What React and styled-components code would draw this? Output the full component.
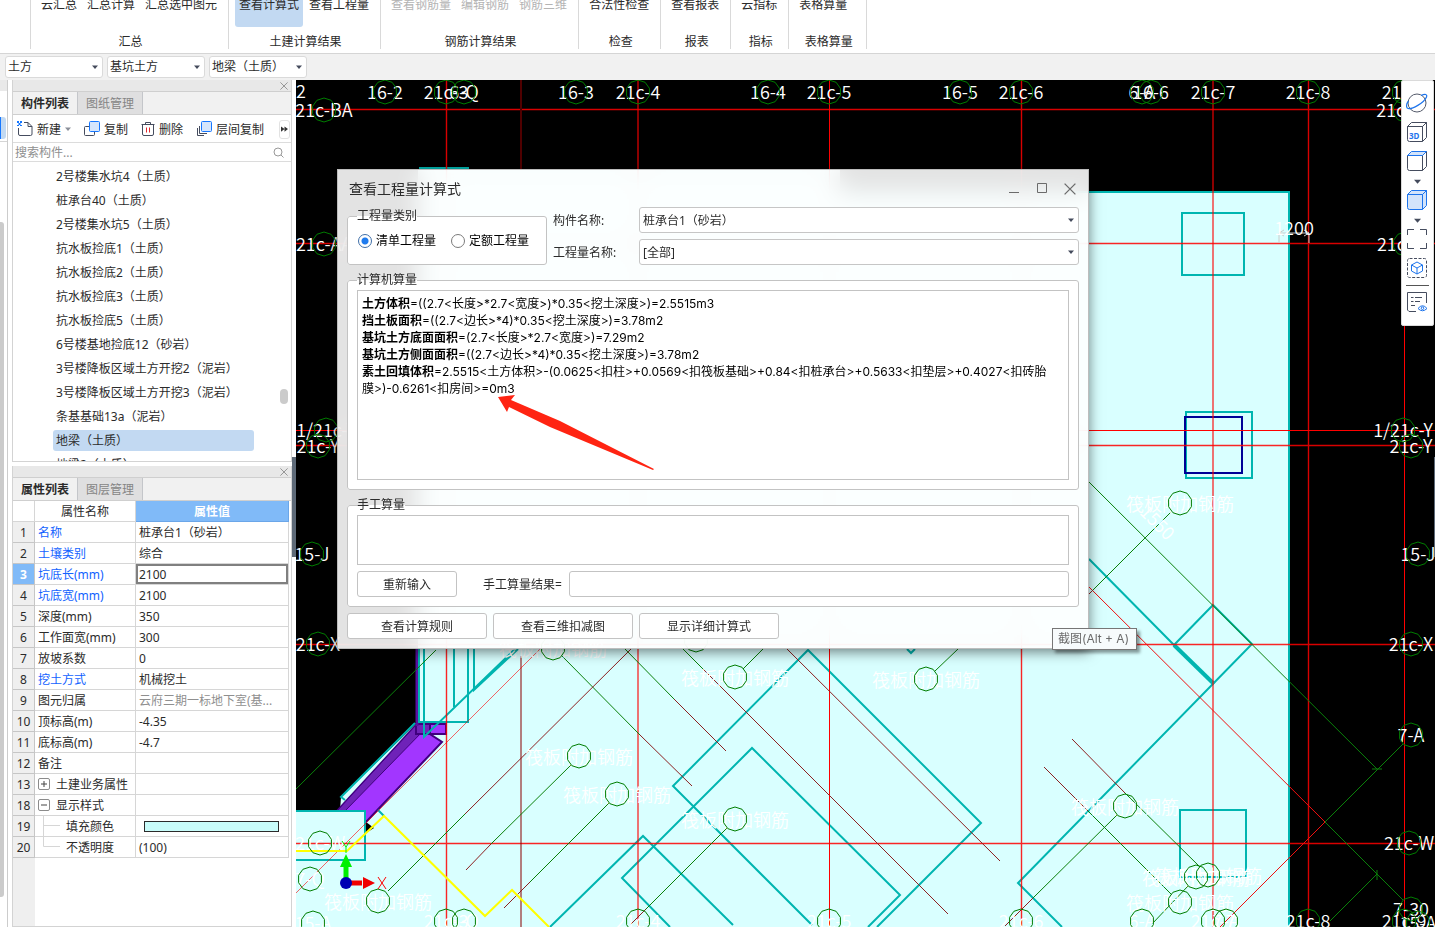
import React, { useState } from "react";
import styled, { createGlobalStyle, css } from "styled-components";

const GlobalStyle = createGlobalStyle`
  * {
    box-sizing: border-box;
  }

  body {
    margin: 0;
    overflow: hidden;
    background: #ffffff;
    color: #2b2b2b;
    font-family: "Noto Sans", "Noto Sans CJK SC", sans-serif;
    font-size: 12px;
    line-height: 17px;
  }

  button,
  input,
  select,
  textarea {
    font: inherit;
    color: inherit;
  }

  button {
    padding: 0;
    border: none;
    background: none;
  }
`;

const Page = styled.div`
  display: flex;
  flex-direction: column;
  height: 100vh;
  overflow: hidden;
`;

/* ---------- ribbon ---------- */

const Ribbon = styled.header`
  display: flex;
  flex: none;
  height: 54px;
  padding-left: 30px;
  border-bottom: 1px solid #d5d5d5;
  overflow: hidden;
`;

const RibbonGroup = styled.section`
  display: flex;
  flex-direction: column;
  justify-content: space-between;
  height: 49px;
  min-width: ${({ $last }) => ($last ? "79px" : "0")};
  padding: 0 6px 0 5px;
  border-left: 1px solid #d9d9d9;
  border-right: ${({ $last }) => ($last ? "1px solid #d9d9d9" : "none")};
`;

const RibbonButtons = styled.div`
  display: flex;
`;

const RibbonButton = styled.button`
  display: flex;
  align-items: flex-start;
  height: 27px;
  margin: 0 1px;
  padding: 0 4px;
  border-radius: 0 0 3px 3px;
  line-height: 10px;
  white-space: nowrap;
  background: ${({ $active }) => ($active ? "#c2d9f2" : "transparent")};
  color: ${({ disabled }) => (disabled ? "#b4b4b4" : "#2b2b2b")};
`;

const RibbonTitle = styled.div`
  padding-left: 3px;
  line-height: 15px;
  text-align: center;
`;

/* ---------- combo boxes ---------- */

const FilterBar = styled.div`
  display: flex;
  flex: none;
  align-items: center;
  gap: 4px;
  height: 26px;
  padding: 0 0 1px 5px;
  background: #f1f1f1;
`;

const ComboBox = styled.div`
  display: grid;
  align-items: center;
  width: ${({ $wide }) => ($wide ? "100%" : "98px")};
  height: ${({ $wide }) => ($wide ? "26px" : "22px")};

  select,
  svg {
    grid-area: 1 / 1;
  }

  select {
    width: 100%;
    height: 100%;
    padding: 0 16px 0 ${({ $wide }) => ($wide ? "3px" : "2px")};
    border: 1px solid ${({ $wide }) => ($wide ? "#c6c6c6" : "#dadada")};
    border-radius: 3px;
    background: #ffffff;
    appearance: none;
  }

  svg {
    justify-self: end;
    margin-right: 5px;
    pointer-events: none;
  }
`;

/* ---------- left side ---------- */

const Workspace = styled.main`
  display: flex;
  flex: 1;
  min-height: 0;
`;

const NavStrip = styled.aside`
  display: flex;
  flex: none;
  flex-direction: column;
  width: 8px;
  border-right: 1px solid #cccccc;
  overflow: hidden;
`;

const NavHead = styled.div`
  height: 62px;
  padding-top: 37px;
  border-bottom: 1px solid #d5d5d5;
  background: linear-gradient(#e9e9e9 11px, #ffffff 11px);
`;

const NavActive = styled.div`
  width: 6px;
  height: 22px;
  border-radius: 0 3px 3px 0;
  border-left: 1px solid #1677ff;
  background: #c2d9f2;
`;

const NavThumb = styled.div`
  flex: 1;
  width: 4px;
  margin: 80px 0 30px;
  border-radius: 0 3px 3px 0;
  background: #cbcbcb;
`;

const Panels = styled.div`
  display: flex;
  flex: none;
  flex-direction: column;
  gap: 4px;
  width: 280px;
  margin-left: 4px;
`;

const Panel = styled.section`
  display: flex;
  flex-direction: column;
  flex: ${({ $grow }) => $grow} 1 0;
  min-height: 0;
  border: 1px solid #d3d3d3;
  border-top: none;
  overflow: hidden;
`;

const PanelHead = styled.div`
  display: flex;
  flex: none;
  align-items: center;
  justify-content: flex-end;
  height: 12px;
  padding-right: 3px;
  border-bottom: 1px solid #cfcfcf;
  background: #e8e8e8;
`;

const PanelTabs = styled.div`
  display: flex;
  flex: none;
  height: 23px;
  border-bottom: 1px solid #cfcfcf;
  background: #f1f1f1;
`;

const PanelTab = styled.button`
  width: 65px;
  border-right: 1px solid #c4c6ca;
  font-weight: ${({ $active }) => ($active ? 700 : 400)};
  background: ${({ $active }) => ($active ? "#f1f1f1" : "#dfdfe0")};
  color: ${({ $active }) => ($active ? "#2b2b2b" : "#858585")};
`;

const PanelTools = styled.div`
  display: flex;
  flex: none;
  align-items: center;
  gap: 13px;
  height: 28px;
  padding: 1px 0 0 4px;
  border-bottom: 1px solid #dcdcdc;
`;

const ToolButton = styled.button`
  display: flex;
  align-items: center;
  gap: 4px;
  white-space: nowrap;
`;

const MoreButton = styled.button`
  display: flex;
  flex: none;
  align-items: center;
  justify-content: center;
  width: 11px;
  height: 19px;
  margin: 0 1px 0 auto;
  border: 1px solid #e2e2e2;
  border-radius: 3px;
`;

const SearchRow = styled.label`
  display: flex;
  flex: none;
  align-items: center;
  height: 19px;
  padding: 0 7px 0 2px;
  border-bottom: 1px solid #dcdcdc;

  input {
    flex: 1;
    min-width: 0;
    padding: 0;
    border: none;
    outline: none;
  }

  input::placeholder {
    color: #8f8f8f;
  }
`;

const ListArea = styled.div`
  display: flex;
  flex: 1;
  min-height: 0;
  overflow: hidden;
`;

const PartList = styled.ul`
  flex: 1;
  margin: 0;
  padding: 4px 26px 0 40px;
  list-style: none;
`;

const PartItem = styled.li`
  height: 21px;
  margin-bottom: 3px;
  padding-left: 3px;
  border-radius: 3px;
  line-height: 21px;
  white-space: nowrap;
  background: ${({ $active }) => ($active ? "#c2d9f2" : "transparent")};
`;

const ListThumb = styled.div`
  align-self: flex-end;
  width: 8px;
  height: 15px;
  margin: 0 3px 57px 0;
  border-radius: 4px;
  background: #cbcbcb;
`;

const TableArea = styled.div`
  flex: 1;
  padding-right: 2px;
  background: linear-gradient(90deg, #efefef 22px, #ffffff 22px);
`;

const PropTable = styled.table`
  width: 100%;
  table-layout: fixed;
  border-collapse: separate;
  border-spacing: 0;

  th,
  td {
    height: 21px;
    padding: 0 3px;
    border-right: 1px solid #d6d6d6;
    border-bottom: 1px solid #d6d6d6;
    background: #ffffff;
    font-weight: 400;
    text-align: left;
    white-space: nowrap;
    overflow: hidden;
  }

  thead th {
    text-align: center;
  }
`;

const ValueHead = styled.th`
  && {
    border-color: #6ba6e8;
    background: #80baf8;
    color: #ffffff;
    font-weight: 700;
  }
`;

const RowNumber = styled.th`
  && {
    padding: 0;
    border-color: #c6c6c6;
    text-align: center;
    background: #efefef;
    ${({ $active }) =>
      $active &&
      css`
        background: #80baf8;
        color: #ffffff;
        font-weight: 700;
      `}
  }
`;

const NameCell = styled.td`
  && {
    color: ${({ $key }) => ($key ? "#1262ff" : "#2b2b2b")};
  }
`;

const NameInner = styled.div`
  display: flex;
  align-items: center;
  gap: 6px;
`;

const ValueCell = styled.td`
  && {
    color: ${({ $muted }) => ($muted ? "#8f8f8f" : "#2b2b2b")};
    text-overflow: ellipsis;
    box-shadow: ${({ $active }) =>
      $active ? "inset 0 0 0 2px #808080" : "none"};
  }
`;

const Expander = styled.button`
  display: flex;
  align-items: center;
  justify-content: center;
  width: 12px;
  height: 12px;
  border: 1px solid #8b8b8b;
  border-radius: 2px;
`;

const Swatch = styled.div`
  height: 11px;
  margin: 0 6px 0 5px;
  border: 1px solid #2b2b2b;
  background: #c8fcfa;
`;

const Gutter = styled.div`
  display: flex;
  flex: none;
  align-items: center;
  width: 4px;
  padding-top: 7px;
`;

const Splitter = styled.button`
  width: 4px;
  height: 100px;
  background: #5e6a78;
`;

/* ---------- drawing area ---------- */

const Stage = styled.div`
  position: relative;
  flex: 1;
  min-width: 0;
  overflow: hidden;
  background: #000000;
`;

const Drawing = styled.svg`
  display: block;
  width: 100%;
  height: 100%;
  font-family: "Noto Sans CJK SC", sans-serif;
  font-size: 18px;
  font-weight: 350;
`;

const Marker = styled.svg`
  position: absolute;
  left: 200px;
  top: 314px;
  pointer-events: none;
`;

const Palette = styled.nav`
  position: absolute;
  top: 0;
  right: 1px;
  display: flex;
  flex-direction: column;
  align-items: center;
  width: 33px;
  height: 246px;
  padding: 12px 1px 0 0;
  border: 1px solid #dadada;
  border-radius: 2px;
  background: #ffffff;
`;

const PaletteButton = styled.button`
  display: flex;
  align-items: center;
  justify-content: center;
  width: 22px;
  height: ${({ $caret }) => ($caret ? "10px" : "20px")};
  margin-bottom: ${({ $gap }) => $gap || 0}px;
`;

const PaletteRule = styled.hr`
  width: 23px;
  height: 1px;
  margin: 7px 0 6px;
  border: none;
  background: #555555;
`;

const Tooltip = styled.div`
  position: absolute;
  left: 756px;
  top: 548px;
  height: 22px;
  padding: 0 7px 0 5px;
  border: 1px solid #767676;
  background: #f7fbfc;
  box-shadow: 3px 3px 3px rgba(0, 0, 0, 0.4);
  color: #6b6b6b;
  font-family: Inter, "Noto Sans CJK SC", sans-serif;
  line-height: 20px;
  white-space: nowrap;
`;

/* ---------- dialog ---------- */

const Dialog = styled.form`
  position: absolute;
  left: 41px;
  top: 89px;
  display: flex;
  flex-direction: column;
  gap: 6px;
  width: 752px;
  padding: 0 9px 9px;
  border: 1px solid #bdbdbd;
  background: rgba(255, 255, 255, 0.89);
  backdrop-filter: blur(12px);
  box-shadow: 0 3px 12px rgba(0, 0, 0, 0.5);
`;

const DialogHead = styled.div`
  display: flex;
  align-items: center;
  justify-content: space-between;
  height: 31px;
  padding: 7px 3px 0 2px;
`;

const DialogTitle = styled.h1`
  margin: 0;
  font-size: 14px;
  font-weight: 400;
  line-height: 20px;
`;

const WindowButtons = styled.div`
  display: flex;
  gap: 16px;

  button {
    display: flex;
  }
`;

const TopFields = styled.div`
  display: grid;
  grid-template-columns: 200px 80px 1fr;
  grid-template-rows: 26px 26px;
  gap: 6px;
  align-items: center;
`;

const GroupBox = styled.fieldset`
  min-width: 0;
  margin: 0;
  padding: 1px 9px 9px;
  border: 1px solid #c3c3c3;
  border-radius: 3px;
  background: #ffffff;

  legend {
    padding: 0;
    line-height: 18px;
  }
`;

const KindBox = styled(GroupBox)`
  grid-row: 1 / 3;
  align-self: stretch;
`;

const RadioRow = styled.div`
  display: flex;
  gap: 15px;
  padding: 6px 0 0 1px;
  color: #000000;
`;

const RadioLabel = styled.label`
  display: flex;
  align-items: center;
  gap: 4px;

  input {
    width: 14px;
    height: 14px;
    margin: 0;
    border: 1px solid #7b7b7b;
    border-radius: 50%;
    background: #ffffff;
    appearance: none;
  }

  input:checked {
    border-color: #3f6fa8;
    background: radial-gradient(circle, #1f7bee 3px, #ffffff 4px);
  }
`;

const Formula = styled.div`
  height: 190px;
  padding: 4px 12px 4px 4px;
  border: 1px solid #c3c3c3;
  color: #000000;
  font-family: Inter, "Noto Sans CJK SC", sans-serif;
  word-break: break-all;

  p {
    margin: 0;
  }
`;

const ManualInput = styled.textarea`
  display: block;
  width: 100%;
  height: 50px;
  border: 1px solid #c3c3c3;
  outline: none;
  resize: none;
`;

const ResultRow = styled.div`
  display: flex;
  align-items: center;
  margin-top: 6px;

  label {
    margin: 0 7px 0 26px;
  }

  input {
    flex: 1;
    height: 26px;
    border: 1px solid #c3c3c3;
    border-radius: 3px;
    outline: none;
  }
`;

const PushButton = styled.button`
  width: ${({ $small }) => ($small ? "100px" : "140px")};
  height: 26px;
  border: 1px solid #c3c3c3;
  border-radius: 3px;
  background: #ffffff;
`;

const DialogFoot = styled.div`
  display: flex;
  gap: 6px;
`;

/* ---------- data ---------- */

const ribbonGroups = [
  { title: "汇总", items: ["云汇总", "汇总计算", "汇总选中图元"] },
  { title: "土建计算结果", items: ["查看计算式", "查看工程量"], active: 0 },
  {
    title: "钢筋计算结果",
    items: ["查看钢筋量", "编辑钢筋", "钢筋三维"],
    disabled: true,
  },
  { title: "检查", items: ["合法性检查"] },
  { title: "报表", items: ["查看报表"] },
  { title: "指标", items: ["云指标"] },
  { title: "表格算量", items: ["表格算量"] },
];

const parts = [
  "2号楼集水坑4（土质）",
  "桩承台40（土质）",
  "2号楼集水坑5（土质）",
  "抗水板捡底1（土质）",
  "抗水板捡底2（土质）",
  "抗水板捡底3（土质）",
  "抗水板捡底5（土质）",
  "6号楼基地捡底12（砂岩）",
  "3号楼降板区域土方开挖2（泥岩）",
  "3号楼降板区域土方开挖3（泥岩）",
  "条基基础13a（泥岩）",
  "地梁（土质）",
  "地梁2（土质）",
];

const properties = [
  { no: 1, name: "名称", value: "桩承台1（砂岩）", key: true },
  { no: 2, name: "土壤类别", value: "综合", key: true },
  { no: 3, name: "坑底长(mm)", value: "2100", key: true, active: true },
  { no: 4, name: "坑底宽(mm)", value: "2100", key: true },
  { no: 5, name: "深度(mm)", value: "350" },
  { no: 6, name: "工作面宽(mm)", value: "300" },
  { no: 7, name: "放坡系数", value: "0" },
  { no: 8, name: "挖土方式", value: "机械挖土", key: true },
  { no: 9, name: "图元归属", value: "云府三期一标地下室(基...", muted: true },
  { no: 10, name: "顶标高(m)", value: "-4.35" },
  { no: 11, name: "底标高(m)", value: "-4.7" },
  { no: 12, name: "备注", value: "" },
  { no: 13, name: "土建业务属性", value: "", sign: "+" },
  { no: 18, name: "显示样式", value: "", sign: "-" },
  { no: 19, name: "填充颜色", swatch: true, branch: "mid" },
  { no: 20, name: "不透明度", value: "(100)", branch: "end" },
];

const formulas = [
  ["土方体积", "=((2.7<长度>*2.7<宽度>)*0.35<挖土深度>)=2.5515m3"],
  ["挡土板面积", "=((2.7<边长>*4)*0.35<挖土深度>)=3.78m2"],
  ["基坑土方底面面积", "=(2.7<长度>*2.7<宽度>)=7.29m2"],
  ["基坑土方侧面面积", "=((2.7<边长>*4)*0.35<挖土深度>)=3.78m2"],
  [
    "素土回填体积",
    "=2.5515<土方体积>-(0.0625<扣柱>+0.0569<扣筏板基础>+0.84<扣桩承台>+0.5633<扣垫层>+0.4027<扣砖胎膜>)-0.6261<扣房间>=0m3",
  ],
];

// axis bubbles: text, x, y
const axes = [
  ["16-2", 385, 92],
  ["21c-3", 446, 92],
  ["6-Q", 464, 92],
  ["16-3", 576, 92],
  ["21c-4", 638, 92],
  ["16-4", 768, 92],
  ["21c-5", 829, 92],
  ["16-5", 960, 92],
  ["21c-6", 1021, 92],
  ["6-A", 1142, 92],
  ["16-6", 1151, 92],
  ["21c-7", 1213, 92],
  ["21c-8", 1308, 92],
  ["21c-9", 1404, 92],
  ["21c-BA", 324, 110],
  ["21c-BA", 1405, 110],
  ["21c-AA", 324, 244],
  ["21c-AA", 1405, 244],
  ["1/21c-Y", 326, 430],
  ["21c-Y", 318, 446],
  ["1/21c-Y", 1403, 430],
  ["21c-Y", 1411, 446],
  ["15-J", 312, 554],
  ["15-J", 1418, 554],
  ["21c-X", 318, 644],
  ["21c-X", 1411, 644],
  ["7-A", 1411, 735],
  ["21c-W", 320, 843],
  ["21c-W", 1409, 843],
  ["7-Q", 310, 879],
  ["15-A", 313, 923],
  ["21c-3", 446, 921],
  ["6-Q", 464, 921],
  ["21c-4", 638, 921],
  ["21c-5", 829, 921],
  ["21c-6", 1021, 921],
  ["6-A", 1142, 921],
  ["21c-7", 1213, 921],
  ["7-A", 1226, 921],
  ["21c-8", 1308, 921],
  ["7-30", 1411, 909],
  ["21c-9", 1404, 921],
  ["15-A", 1418, 923],
];

const rebars = [
  [553, 649],
  [735, 678],
  [926, 680],
  [579, 757],
  [617, 795],
  [735, 820],
  [1125, 807],
  [1180, 504],
  [1196, 878],
  [1208, 876],
  [1180, 903],
  [378, 902],
];

const greenLines =
  "M296 789L436 650M388 891L465 814M571 765L491 844M609 803L530 882M727 828L646 909" +
  "M562 656L640 735M625 649L674 699M683 649L703 669M743 669L763 649M935 671L958 649" +
  "M1117 815L1033 898M1125 793L1200 867M1088 811L1172 895M1152 924L1188 886" +
  "M1171 512L1093 590M1089 482L1377 769M1403 744L1325 822L1403 900M1377 874L1330 921" +
  "M1372 769H1382M1377 870V880";

const brownLines =
  "M465 814L631 649M491 844L466 870M530 882L504 908M646 909L630 925M640 735L692 786" +
  "M674 699L726 751M703 669L948 914M787 649L1000 861M1033 898L1005 926" +
  "M1072 739L1125 793M1044 767L1088 811M1093 590L1089 594";

const tealLines =
  "M812 925L673 786L808 650L981 823L877 927M670 927L622 878L752 748L900 895L868 927" +
  "M550 927L643 836L733 925M907 649L911 653L915 649M1089 559L1174 645L1213 605L1252 644L1018 883L1062 927" +
  "M1182 213H1244V275H1182ZM1180 810H1246V877H1180ZM1186 412H1252V478H1186Z" +
  "M424 649V737L515 649M454 649V707M419 168H469M468 649V722H419V649M474 649V690L518 649M378 810L384 816";

const bubble = (x, y) =>
  Array.from({ length: 10 }, (_, i) => {
    const a = (i * Math.PI) / 5 - Math.PI / 2;
    return `${(x + 12 * Math.cos(a)).toFixed(1)},${(y + 12 * Math.sin(a)).toFixed(1)}`;
  }).join(" ");

/* ---------- icons ---------- */

const Caret = ({ size = 6, color = "#444b5c" }) => (
  <svg width={size} height={size - 2} viewBox="0 0 6 4">
    <path d="M0 .5H6L3 4Z" fill={color} />
  </svg>
);

const CloseMark = ({ size = 8, color = "#8b8b8b" }) => (
  <svg width={size} height={size} viewBox="0 0 10 10" stroke={color} fill="none">
    <path d="M.5 .5L9.5 9.5M9.5 .5L.5 9.5" strokeWidth="1.1" />
  </svg>
);

const NewIcon = () => (
  <svg width="16" height="16" viewBox="0 0 16 16" fill="none">
    <path
      d="M7 1.5H11L15 5.5V13A1.5 1.5 0 0 1 13.5 14.5H3A1.5 1.5 0 0 1 1.5 13V7M11 1.5V5.5H15"
      stroke="#454c5e"
    />
    <path
      d="M0 0H2V2H0ZM3 0H5V2H3ZM1.5 2H3.5V4H1.5ZM0 4H2V5H0ZM3 4H5V5H3Z"
      fill="#1677ff"
    />
  </svg>
);

const CopyIcon = ({ layers }) => (
  <svg width="16" height="16" viewBox="0 0 16 16" fill="none">
    {layers ? (
      <path d="M3.5 5V12.5H11M1.5 7V14.5H8" stroke="#454c5e" />
    ) : (
      <path
        d="M5 5.5H1.5A1 1 0 0 0 .5 6.5V13.5A1 1 0 0 0 1.5 14.5H9.5A1 1 0 0 0 10.5 13.5V11"
        stroke="#454c5e"
      />
    )}
    <rect x="5.5" y=".5" width="10" height="10" rx="1" fill="#d6e6fc" stroke="#1677ff" />
  </svg>
);

const TrashIcon = () => (
  <svg width="14" height="16" viewBox="0 0 14 16" fill="none">
    <path
      d="M.5 3.5H13.5M4.500 3.5V1.5H9.5V3.5M1.500 3.5V13A1.5 1.5 0 0 0 3 14.5H11A1.5 1.5 0 0 0 12.5 13V3.5"
      stroke="#454c5e"
    />
    <path d="M5.5 6.5V11.5M8.5 6.5V11.5" stroke="#e0282e" />
  </svg>
);

const Cube = ({ kind }) => (
  <svg width="20" height="20" viewBox="0 0 20 20" fill="none" strokeLinejoin="round">
    <path
      d="M.5 4.5H15.5V19.5H2.5Q.5 19.5 .5 17.5ZM15.5 4.5L19.5 .5V15.5L15.5 19.5"
      fill={kind === "solid" ? "#d3e4fb" : "none"}
      stroke={kind === "solid" ? "#1d74ec" : "#454c5e"}
    />
    <path
      d="M.5 4.5L4.5 .5H19.5L15.5 4.5Z"
      fill={kind === "3d" ? "none" : "#d3e4fb"}
      stroke={kind === "3d" ? "#454c5e" : "#1d74ec"}
    />
    {kind === "3d" && (
      <text x="2" y="17" fontSize="8" fontWeight="700" fill="#1d74ec">
        3D
      </text>
    )}
  </svg>
);

const OrbitIcon = () => (
  <svg width="22" height="20" viewBox="0 0 22 20" fill="none">
    <circle cx="11" cy="10" r="9" stroke="#555b6b" />
    <path
      d="M2.5 8C0 11 0 15 2 15.5C6 16.5 18 10 20.5 4C21.5 1 19 .8 15 2.5"
      stroke="#1d74ec"
      strokeWidth="1.2"
    />
  </svg>
);

const ExtentIcon = () => (
  <svg width="20" height="20" viewBox="0 0 20 20" fill="none" stroke="#454c5e">
    <path d="M.5 6V.5H7M13 .5H19.5V6M19.5 14V19.5H13M7 19.5H.5V14" />
  </svg>
);

const SelectIcon = () => (
  <svg width="20" height="20" viewBox="0 0 20 20" fill="none">
    <rect x=".5" y=".5" width="19" height="19" rx="2" stroke="#454c5e" strokeDasharray="3 1.5" />
    <path
      d="M10 4L15.5 7V13L10 16L4.5 13V7ZM4.5 7L10 10L15.5 7M10 10V16"
      stroke="#1d74ec"
    />
  </svg>
);

const ListEyeIcon = () => (
  <svg width="20" height="20" viewBox="0 0 20 20" fill="none">
    <path d="M9 19.5H2L.5 18V.5H19.5V11" stroke="#454c5e" />
    <path d="M4 5.5H6.5M8 5.5H15M4 9.5H6.5M8 9.5H13M4 13.5H8" stroke="#454c5e" />
    <path d="M11 16.5Q15.5 11 20 16.5Q15.5 21 11 16.5Z" stroke="#1d74ec" />
    <circle cx="15.5" cy="16.2" r="1.3" stroke="#1d74ec" />
  </svg>
);

const Combo = ({ label, id, options, wide }) => (
  <ComboBox $wide={wide}>
    <select id={id} aria-label={label}>
      {options.map((o) => (
        <option key={o}>{o}</option>
      ))}
    </select>
    <Caret />
  </ComboBox>
);

const FloorPlan = () => (
  <Drawing viewBox="296 80 1139 847" preserveAspectRatio="xMinYMin slice">
    {/* raft slab */}
    <path
      d="M418 170H840V192H1289V927H296V811H340L341 797L418 722Z"
      fill="#d9ffff"
    />
    <path d="M840 192H1289V927" fill="none" stroke="#00b5b0" strokeWidth="2" />

    {/* beams */}
    <path d="M366 822L374 828L366 833Z" fill="#000" />
    <path d="M416 725L442 742L366 822L360 811H337Z" fill="#a236ff" stroke="#40007f" strokeWidth="2" />
    <path d="M416 725L424 730L345 811H337Z" fill="#6f22b8" stroke="#40007f" />
    <path d="M416 724H446V734H416Z" fill="#a236ff" stroke="#40007f" strokeWidth="2" />
    <path d="M416 724H430V734H416Z" fill="#6f22b8" stroke="#40007f" strokeWidth="2" />
    <path d="M417 649V726" stroke="#5a10a0" strokeWidth="3" />
    <path d="M415 723L341 797L345 800" fill="none" stroke="#00b5b0" strokeWidth="2" />
    <rect x="290" y="811" width="75" height="49" fill="#d9ffff" stroke="#00b5b0" strokeWidth="2" />

    <path d={tealLines} fill="none" stroke="#00b5b0" strokeWidth="2" />
    <path d="M1174 645L1214 684" stroke="#00b5b0" strokeWidth="4" />
    <path d="M1185 417H1242V473H1185Z" fill="none" stroke="#000096" strokeWidth="2" />

    {/* grid */}
    <g stroke="#ff0000">
      <path d="M829.5 80V927M1404.5 80V927M296 430.5H1435" />
      <path
        d="M446.5 80V927M1021.5 80V927M1308.5 80V927M296 109.5H1435M296 243.5H1435M296 843.5H1435M296 644.5H1435M296 445.5H1435"
        strokeWidth="1.4"
        opacity=".85"
      />
      <path d="M638 80V927M1213 80V927" strokeWidth="2" opacity=".55" />
    </g>
    <path d="M521 80V169" stroke="#500000" strokeWidth="2" />
    <path d="M521 656V927" stroke="#8a0000" strokeWidth="2" opacity=".5" />
    <path d="M540 649L296 893" stroke="#ff0000" opacity=".6" />
    <path d="M1089 587L1325 822L1220 927" fill="none" stroke="#f01010" />

    <path d={greenLines} fill="none" stroke="#0a800a" />
    <path d={brownLines} fill="none" stroke="#8c2020" />
    <path
      d="M296 851H347L384 816L485 916L512 890L549 927"
      fill="none"
      stroke="#ffff00"
      strokeWidth="2"
    />

    {/* dimension */}
    <path d="M1279 243V233H1309V243M1284 230L1279 233L1284 236M1304 230L1309 233L1304 236" fill="none" stroke="#cccccc" />

    <g fill="#ffffff" textAnchor="middle">
      <text x="301" y="98">2</text>
      <text x="1294" y="235">1200</text>
      <text x="1157" y="529" transform="rotate(45 1157 523)">
        1550
      </text>
      {axes.map(([label, x, y], i) => (
        <text key={i} x={x} y={y + 7}>
          {label}
        </text>
      ))}
      {rebars.map(([x, y], i) => (
        <text key={i} x={x} y={y + 7}>
          筏板附加钢筋
        </text>
      ))}
    </g>
    <g fill="none" stroke="#007d00">
      {axes.map(([, x, y], i) => (
        <polygon key={i} points={bubble(x, y)} />
      ))}
      {rebars.map(([x, y], i) => (
        <polygon key={i} points={bubble(x, y - 1)} />
      ))}
      <polygon points={bubble(696, 640)} />
    </g>

    {/* coordinate mark */}
    <path d="M346 883V866" stroke="#00f000" strokeWidth="5" />
    <path d="M346 854L352 867H340Z" fill="#00f000" />
    <path d="M346 883H362" stroke="#f00000" strokeWidth="5" />
    <path d="M375 883L363 877V889Z" fill="#f00000" />
    <circle cx="346" cy="883" r="6" fill="#0000b4" />
    <path d="M378 877L386 889M386 877L378 889" stroke="#ff0000" />
    <path d="M342 841L346 847L350 841M346 847V853" fill="none" stroke="#00f000" />
    <path d="M1434 457H1436V557H1434Z" fill="#5e6a78" />
  </Drawing>
);

const PropertyName = ({ row }) => {
  if (row.sign) {
    return (
      <NameInner>
        <Expander type="button" aria-label={row.name}>
          <svg width="6" height="6" viewBox="0 0 6 6" stroke="#444444">
            <path d={row.sign === "+" ? "M0 3H6M3 0V6" : "M0 3H6"} />
          </svg>
        </Expander>
        {row.name}
      </NameInner>
    );
  }
  if (row.branch) {
    return (
      <NameInner>
        <svg width="22" height="20" viewBox="0 0 22 20" fill="none" stroke="#d6d6d6">
          <path d={row.branch === "mid" ? "M5.5 0V20M5.5 9.5H22" : "M5.5 0V9.5H22"} />
        </svg>
        {row.name}
      </NameInner>
    );
  }
  return row.name;
};

const CalcDialog = () => {
  const [kind, setKind] = useState("清单工程量");

  return (
    <Dialog onSubmit={(e) => e.preventDefault()}>
      <DialogHead>
        <DialogTitle>查看工程量计算式</DialogTitle>
        <WindowButtons>
          <button type="button" aria-label="最小化">
            <svg width="12" height="12" viewBox="0 0 12 12" stroke="#6b6b6b">
              <path d="M1 9.5H11" />
            </svg>
          </button>
          <button type="button" aria-label="最大化">
            <svg width="12" height="12" viewBox="0 0 12 12" stroke="#6b6b6b" fill="none">
              <path d="M1.5 .5H10.5V9.5H1.5Z" />
            </svg>
          </button>
          <button type="button" aria-label="关闭">
            <CloseMark size={12} color="#6b6b6b" />
          </button>
        </WindowButtons>
      </DialogHead>

      <TopFields>
        <KindBox>
          <legend>工程量类别</legend>
          <RadioRow>
            {["清单工程量", "定额工程量"].map((name) => (
              <RadioLabel key={name}>
                <input
                  type="radio"
                  name="kind"
                  checked={kind === name}
                  onChange={() => setKind(name)}
                />
                {name}
              </RadioLabel>
            ))}
          </RadioRow>
        </KindBox>
        <label htmlFor="part">构件名称:</label>
        <Combo id="part" wide options={["桩承台1（砂岩）"]} />
        <label htmlFor="quantity">工程量名称:</label>
        <Combo id="quantity" wide options={["[全部]"]} />
      </TopFields>

      <GroupBox>
        <legend>计算机算量</legend>
        <Formula>
          {formulas.map(([name, text]) => (
            <p key={name}>
              <b>{name}</b>
              {text}
            </p>
          ))}
        </Formula>
      </GroupBox>

      <GroupBox>
        <legend>手工算量</legend>
        <ManualInput aria-label="手工算量" />
        <ResultRow>
          <PushButton type="button" $small>
            重新输入
          </PushButton>
          <label htmlFor="result">手工算量结果=</label>
          <input id="result" type="text" />
        </ResultRow>
      </GroupBox>

      <DialogFoot>
        <PushButton type="button">查看计算规则</PushButton>
        <PushButton type="button">查看三维扣减图</PushButton>
        <PushButton type="button">显示详细计算式</PushButton>
      </DialogFoot>
    </Dialog>
  );
};

const App = () => {
  const [selected, setSelected] = useState("地梁（土质）");

  return (
    <Page>
      <GlobalStyle />
      <Ribbon>
        {ribbonGroups.map((group, i) => (
          <RibbonGroup key={group.title} $last={i === ribbonGroups.length - 1}>
            <RibbonButtons>
              {group.items.map((item, n) => (
                <RibbonButton
                  key={item}
                  $active={group.active === n}
                  disabled={group.disabled}
                >
                  {item}
                </RibbonButton>
              ))}
            </RibbonButtons>
            <RibbonTitle>{group.title}</RibbonTitle>
          </RibbonGroup>
        ))}
      </Ribbon>

      <FilterBar>
        <Combo label="构件大类" options={["土方"]} />
        <Combo label="构件类型" options={["基坑土方"]} />
        <Combo label="构件" options={["地梁（土质）"]} />
      </FilterBar>

      <Workspace>
        <NavStrip>
          <NavHead>
            <NavActive />
          </NavHead>
          <NavThumb />
        </NavStrip>

        <Panels>
          <Panel $grow={382}>
            <PanelHead>
              <CloseMark />
            </PanelHead>
            <PanelTabs>
              <PanelTab $active>构件列表</PanelTab>
              <PanelTab>图纸管理</PanelTab>
            </PanelTabs>
            <PanelTools>
              <ToolButton>
                <NewIcon />
                新建
                <Caret color="#8b8f99" />
              </ToolButton>
              <ToolButton>
                <CopyIcon />
                复制
              </ToolButton>
              <ToolButton>
                <TrashIcon />
                删除
              </ToolButton>
              <ToolButton>
                <CopyIcon layers />
                层间复制
              </ToolButton>
              <MoreButton aria-label="更多">
                <svg width="7" height="6" viewBox="0 0 8 6" fill="#333333">
                  <path d="M0 0L4 3L0 6ZM4 0L8 3L4 6Z" />
                </svg>
              </MoreButton>
            </PanelTools>
            <SearchRow>
              <input type="text" aria-label="搜索构件" placeholder="搜索构件..." />
              <svg width="11" height="11" viewBox="0 0 11 11" fill="none" stroke="#999999">
                <circle cx="5" cy="5" r="4" />
                <path d="M8 8L10.5 10.5" />
              </svg>
            </SearchRow>
            <ListArea>
              <PartList>
                {parts.map((name) => (
                  <PartItem
                    key={name}
                    $active={name === selected}
                    onClick={() => setSelected(name)}
                  >
                    {name}
                  </PartItem>
                ))}
              </PartList>
              <ListThumb />
            </ListArea>
          </Panel>

          <Panel $grow={461}>
            <PanelHead>
              <CloseMark />
            </PanelHead>
            <PanelTabs>
              <PanelTab $active>属性列表</PanelTab>
              <PanelTab>图层管理</PanelTab>
            </PanelTabs>
            <TableArea>
              <PropTable>
                <colgroup>
                  <col width="22" />
                  <col width="101" />
                  <col />
                </colgroup>
                <thead>
                  <tr>
                    <th />
                    <th>属性名称</th>
                    <ValueHead>属性值</ValueHead>
                  </tr>
                </thead>
                <tbody>
                  {properties.map((row) => (
                    <tr key={row.no}>
                      <RowNumber $active={row.active}>{row.no}</RowNumber>
                      <NameCell $key={row.key}>
                        <PropertyName row={row} />
                      </NameCell>
                      <ValueCell $active={row.active} $muted={row.muted}>
                        {row.swatch ? <Swatch /> : row.value}
                      </ValueCell>
                    </tr>
                  ))}
                </tbody>
              </PropTable>
            </TableArea>
          </Panel>
        </Panels>

        <Gutter>
          <Splitter aria-label="折叠" />
        </Gutter>

        <Stage>
          <FloorPlan />
          <CalcDialog />
          <Marker width="160" height="80" viewBox="496 394 160 80">
            <path
              d="M498 397L515 395L511 400L560 421L654 469L653 470L550 427L509 407L507 412Z"
              fill="#ff2412"
            />
          </Marker>
          <Tooltip>截图(Alt + A)</Tooltip>
          <Palette>
            <PaletteButton $gap={9} aria-label="动态观察">
              <OrbitIcon />
            </PaletteButton>
            <PaletteButton $gap={9} aria-label="三维">
              <Cube kind="3d" />
            </PaletteButton>
            <PaletteButton $gap={5} aria-label="俯视">
              <Cube kind="top" />
            </PaletteButton>
            <PaletteButton $caret $gap={4} aria-label="视图">
              <Caret size={7} />
            </PaletteButton>
            <PaletteButton $gap={5} aria-label="实体">
              <Cube kind="solid" />
            </PaletteButton>
            <PaletteButton $caret $gap={4} aria-label="显示">
              <Caret size={7} />
            </PaletteButton>
            <PaletteButton $gap={9} aria-label="全屏">
              <ExtentIcon />
            </PaletteButton>
            <PaletteButton aria-label="局部三维">
              <SelectIcon />
            </PaletteButton>
            <PaletteRule />
            <PaletteButton aria-label="显示设置">
              <ListEyeIcon />
            </PaletteButton>
          </Palette>
        </Stage>
      </Workspace>
    </Page>
  );
};

export default App;
